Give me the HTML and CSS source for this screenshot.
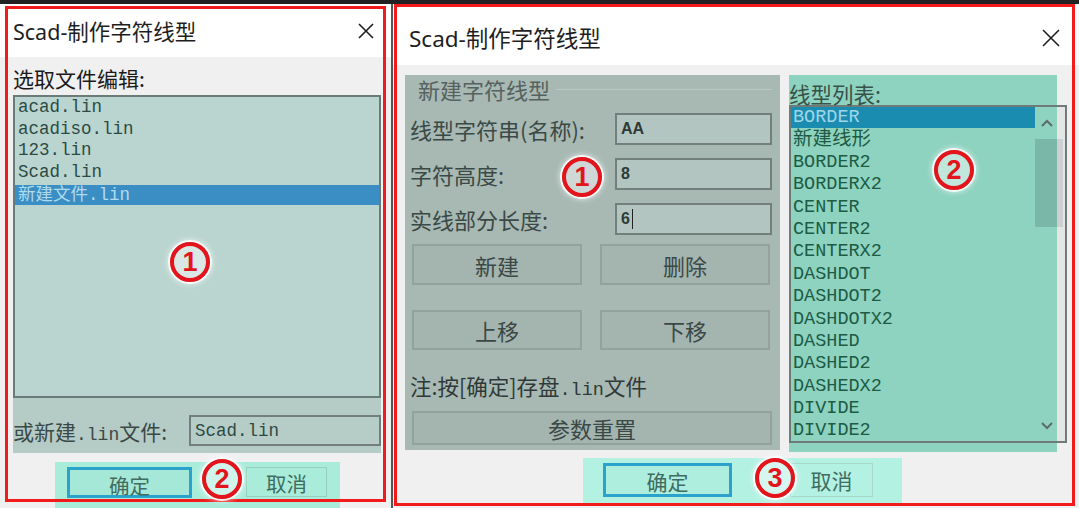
FILE: index.html
```html
<!DOCTYPE html>
<html lang="zh-CN">
<head>
    <meta charset="UTF-8">
    <meta name="viewport" content="width=device-width, initial-scale=1.0">
    <title>Scad-制作字符线型</title>
    <link rel="stylesheet" href="styles.css">
</head>
<body>
    <div class="topbar"></div>
    <div class="screens">
        <!-- 第一个对话框：选取 .lin 文件 -->
        <div class="win win-small">
            <div class="titlebar">
                <span class="title">Scad-制作字符线型</span>
                <svg class="close" width="18" height="18" viewBox="0 0 18 18"><path d="M2 2L16 16M16 2L2 16" stroke="#1e1e1e" stroke-width="1.6" fill="none"/></svg>
            </div>
            <div class="win-body">
                <div class="caption">选取文件编辑:</div>
                <div class="file-panel">
                    <ul class="listbox files">
                        <li>acad.lin</li>
                        <li>acadiso.lin</li>
                        <li>123.lin</li>
                        <li>Scad.lin</li>
                        <li class="sel">新建文件.lin</li>
                    </ul>
                    <div class="new-row">
                        <span class="new-label">或新建<span class="mono">.lin</span>文件:</span>
                        <div class="field file-field">Scad.lin</div>
                    </div>
                </div>
                <div class="footer footer-small">
                    <button class="btn btn-ok">确定</button>
                    <button class="btn btn-cancel">取消</button>
                </div>
            </div>
        </div>

        <div class="divider"></div>

        <!-- 第二个对话框：编辑字符线型 -->
        <div class="win win-large">
            <div class="titlebar titlebar-large">
                <span class="title">Scad-制作字符线型</span>
                <svg class="close" width="18" height="18" viewBox="0 0 18 18"><path d="M1 1L17 17M17 1L1 17" stroke="#1e1e1e" stroke-width="1.6" fill="none"/></svg>
            </div>
            <div class="win-body">
                <div class="panels">
                    <div class="group">
                        <div class="group-title">新建字符线型</div>
                        <div class="row">
                            <span class="row-label">线型字符串(名称):</span>
                            <div class="field">AA</div>
                        </div>
                        <div class="row">
                            <span class="row-label">字符高度:</span>
                            <div class="field">8</div>
                        </div>
                        <div class="row">
                            <span class="row-label">实线部分长度:</span>
                            <div class="field">6<span class="caret"></span></div>
                        </div>
                        <div class="btn-row">
                            <button class="gbtn">新建</button>
                            <button class="gbtn">删除</button>
                        </div>
                        <div class="btn-row btn-row-2">
                            <button class="gbtn">上移</button>
                            <button class="gbtn">下移</button>
                        </div>
                        <div class="note">注:按[确定]存盘<span class="mono">.lin</span>文件</div>
                        <button class="gbtn gbtn-wide">参数重置</button>
                    </div>
                    <div class="types">
                        <div class="types-label">线型列表:</div>
                        <div class="listbox types-box">
                            <ul class="type-items">
                                <li class="sel">BORDER</li>
                                <li class="cjk">新建线形</li>
                                <li>BORDER2</li>
                                <li>BORDERX2</li>
                                <li>CENTER</li>
                                <li>CENTER2</li>
                                <li>CENTERX2</li>
                                <li>DASHDOT</li>
                                <li>DASHDOT2</li>
                                <li>DASHDOTX2</li>
                                <li>DASHED</li>
                                <li>DASHED2</li>
                                <li>DASHEDX2</li>
                                <li>DIVIDE</li>
                                <li>DIVIDE2</li>
                            </ul>
                            <div class="scrollbar">
                                <svg class="arrow" width="14" height="10" viewBox="0 0 14 10"><path d="M2 8L7 3L12 8" stroke="#5d6e69" stroke-width="2" fill="none"/></svg>
                                <div class="thumb"></div>
                                <div class="track"></div>
                                <svg class="arrow" width="14" height="10" viewBox="0 0 14 10"><path d="M2 2L7 7L12 2" stroke="#5d6e69" stroke-width="2" fill="none"/></svg>
                            </div>
                        </div>
                    </div>
                </div>
                <div class="footer footer-large">
                    <button class="btn btn-ok">确定</button>
                    <button class="btn btn-cancel">取消</button>
                </div>
            </div>
        </div>
    </div>

    <!-- 标注：红框与编号 -->
    <div class="frame frame-left"></div>
    <div class="frame frame-right"></div>
    <span class="badge badge-l1">1</span>
    <span class="badge badge-l2">2</span>
    <span class="badge badge-r1">1</span>
    <span class="badge badge-r2">2</span>
    <span class="badge badge-r3">3</span>
</body>
</html>
```

FILE: styles.css
```css
body {
    margin: 0;
    width: 1079px;
    height: 508px;
    overflow: hidden;
    position: relative;
    background-color: #f0f0f0;
    font-family: "Noto Sans", "Noto Sans CJK SC", sans-serif;
    color: #1e1e1e;
}
ul {
    list-style: none;
    margin: 0;
    padding: 0;
}
button {
    font-family: "Noto Sans CJK SC", sans-serif;
    padding: 0;
    box-sizing: border-box;
    cursor: pointer;
}
.mono {
    font-family: "Liberation Mono", monospace;
}
.topbar {
    height: 4px;
    background-color: #222;
}
.screens {
    display: flex;
    height: 504px;
}
.win {
    display: flex;
    flex-direction: column;
    background-color: #f0f0f0;
}
.win-small {
    width: 391px;
}
.win-large {
    flex: 1;
}
.divider {
    width: 2px;
    background-color: #565656;
}
.titlebar {
    height: 53px;
    background-color: #fff;
    display: flex;
    align-items: center;
    justify-content: space-between;
    padding: 0 16px 0 13px;
}
.titlebar .title {
    font-size: 21.5px;
    color: #1e1e1e;
}
.titlebar-large {
    height: 61px;
    box-sizing: border-box;
    padding: 6px 19px 0 16px;
}
.titlebar-large .title {
    font-size: 22.5px;
}
.win-body {
    flex: 1;
    display: flex;
    flex-direction: column;
}

/* 左边对话框 */
.win-small .win-body {
    padding: 9px 0 0 13px;
}
.caption {
    font-family: "Noto Sans CJK SC", sans-serif;
    font-size: 21px;
    line-height: 24px;
    color: #1a1a1a;
}
.file-panel {
    margin-top: 5px;
    width: 368px;
    height: 358px;
    background-color: #b4cbc6;
    display: flex;
    flex-direction: column;
}
.listbox {
    box-sizing: border-box;
    border: 2px solid #6b7b77;
}
.files {
    height: 303px;
    background-color: #bad5cf;
    font-family: "Liberation Mono", "Noto Sans CJK SC", monospace;
    font-size: 17.5px;
    line-height: 21.7px;
    color: #2c4a43;
}
.files li {
    padding-left: 3px;
    white-space: nowrap;
}
.files li.sel {
    background-color: #3b8ec3;
    color: #b0dbee;
    line-height: 20px;
    margin-top: 1px;
}
.new-row {
    flex: 1;
    display: flex;
    align-items: center;
    padding-top: 10px;
}
.new-label {
    font-family: "Noto Sans CJK SC", sans-serif;
    font-size: 21px;
    color: #3a4946;
}
.new-label .mono {
    font-size: 18px;
}
.field {
    box-sizing: border-box;
    height: 32px;
    width: 157px;
    margin-left: auto;
    border: 2px solid #727f7c;
    background-color: #b3c5c0;
    display: flex;
    align-items: center;
    padding-left: 4px;
    font-family: "Liberation Sans", sans-serif;
    font-weight: bold;
    font-size: 16px;
    color: #2e3a37;
}
.file-field {
    width: 192px;
    height: 31px;
    background-color: #b6ccc7;
    font-family: "Liberation Mono", monospace;
    font-weight: normal;
    font-size: 17.5px;
    color: #2c4a43;
}
.footer {
    display: flex;
    align-items: flex-start;
    box-sizing: border-box;
}
.footer-small {
    margin: 9px 0 0 42px;
    width: 285px;
    height: 46px;
    padding: 5px 0 0 12px;
    background-color: #a9ecda;
}
.btn {
    height: 31px;
    font-size: 20.5px;
    color: #3f6c60;
    background-color: #a6e8d8;
}
.btn-ok {
    width: 125px;
    border: 3px solid #2aa2cb;
}
.btn-cancel {
    width: 81px;
    height: 30px;
    margin-left: 54px;
    border: 1px solid #97cfbe;
    background-color: #a9ecda;
}

/* 右边对话框 */
.win-large .win-body {
    padding: 10px 0 0 12px;
}
.panels {
    display: flex;
    align-items: flex-start;
    gap: 9px;
}
.group {
    width: 375px;
    height: 375px;
    box-sizing: border-box;
    background-color: #a8b9b4;
    padding: 3px 8px 0 5px;
    display: flex;
    flex-direction: column;
}
.group-title {
    display: flex;
    align-items: center;
    padding-left: 8px;
    font-family: "Noto Sans CJK SC", sans-serif;
    font-size: 22px;
    line-height: 22px;
    color: #56625f;
}
.group-title::after {
    content: "";
    flex: 1;
    margin-left: 6px;
    border-top: 1px solid #bac9c5;
}
.row {
    display: flex;
    align-items: center;
    height: 32px;
    margin-top: 13px;
}
.row:first-of-type {
    margin-top: 15px;
}
.row-label {
    font-family: "Noto Sans CJK SC", sans-serif;
    font-size: 22px;
    color: #3b4946;
}
.caret {
    display: inline-block;
    width: 1px;
    height: 20px;
    margin-left: 2px;
    background-color: #222;
}
.btn-row {
    display: flex;
    justify-content: space-between;
    padding: 0 2px;
    margin-top: 9px;
}
.btn-row-2 {
    margin-top: 25px;
}
.gbtn {
    width: 170px;
    height: 41px;
    border: 2px solid #93a29e;
    background-color: #a4b4af;
    font-size: 22px;
    line-height: 1;
    color: #3b4946;
}
.btn-row-2 .gbtn {
    height: 40px;
}
.note {
    margin-top: 24px;
    height: 24px;
    font-family: "Noto Sans CJK SC", sans-serif;
    font-size: 21.5px;
    line-height: 24px;
    color: #2f3a38;
}
.note .mono {
    font-size: 18.5px;
    line-height: 1;
}
.gbtn-wide {
    flex: none;
    width: 360px;
    height: 34px;
    margin: 13px 0 0 2px;
}
.types {
    width: 268px;
    height: 377px;
    background-color: #8ed3bf;
    padding-top: 9px;
    box-sizing: border-box;
}
.types-label {
    font-family: "Noto Sans CJK SC", sans-serif;
    font-size: 21.5px;
    line-height: 20px;
    color: #37524b;
}
.types-box {
    margin: 1px -10px 0 0;
    height: 338px;
    border-color: #6f7b78;
    background: linear-gradient(to right, #8ed3bf 266px, #e4e6e5 266px);
    display: flex;
}
.type-items {
    width: 244px;
    font-family: "Liberation Mono", "Noto Sans CJK SC", monospace;
    font-size: 18.5px;
    line-height: 22.4px;
    color: #1d5b45;
}
.type-items li {
    height: 22.4px;
    padding-left: 2px;
    white-space: nowrap;
}
.type-items li.sel {
    height: 21px;
    line-height: 21px;
    margin-bottom: 1.4px;
    background-color: #1a8cb0;
    color: #a0d6e8;
}
.type-items li.cjk {
    font-size: 19.5px;
}
.scrollbar {
    width: 30px;
    display: flex;
    flex-direction: column;
    align-items: center;
}
.scrollbar .arrow {
    flex: none;
    margin: 11px 6px 11px 0;
}
.scrollbar .arrow:last-child {
    margin: 0 6px 10px 0;
}
.thumb {
    align-self: stretch;
    height: 88px;
    margin-right: 2px;
    background: linear-gradient(to right, #7bb7a8 22px, #cdd0cf 22px);
}
.track {
    flex: 1;
}
.footer-large {
    margin: 6px 0 0 178px;
    width: 319px;
    height: 45px;
    padding: 5px 0 0 20px;
    background-color: #b3f1e2;
}
.footer-large .btn {
    height: 34px;
    font-size: 21px;
}
.footer-large .btn-ok {
    width: 129px;
    background-color: #aeeede;
}
.footer-large .btn-cancel {
    width: 83px;
    margin-left: 58px;
    border-color: #a6d9cb;
    background-color: #b3f1e2;
}

/* 标注 */
.frame {
    position: absolute;
    box-sizing: border-box;
    border: 3px solid #f21b1b;
}
.frame-left {
    left: 5px;
    top: 6px;
    width: 381px;
    height: 496px;
}
.frame-right {
    left: 394px;
    top: 4px;
    width: 681px;
    height: 502px;
}
.badge {
    position: absolute;
    width: 40px;
    height: 40px;
    box-sizing: border-box;
    border: 4px solid #e3141b;
    border-radius: 50%;
    background-color: rgba(255, 255, 255, 0.45);
    box-shadow: 0 0 0 2px rgba(255, 255, 255, 0.85), 0 0 5px 3px rgba(255, 255, 255, 0.5);
    display: flex;
    align-items: center;
    justify-content: center;
    font-family: "Liberation Sans", sans-serif;
    font-weight: bold;
    font-size: 27px;
    color: #e3141b;
}
.badge-l1 { left: 170px; top: 242px; }
.badge-l2 { left: 202px; top: 459px; }
.badge-r1 { left: 562px; top: 157px; }
.badge-r2 { left: 934px; top: 150px; }
.badge-r3 { left: 755px; top: 458px; }
```
